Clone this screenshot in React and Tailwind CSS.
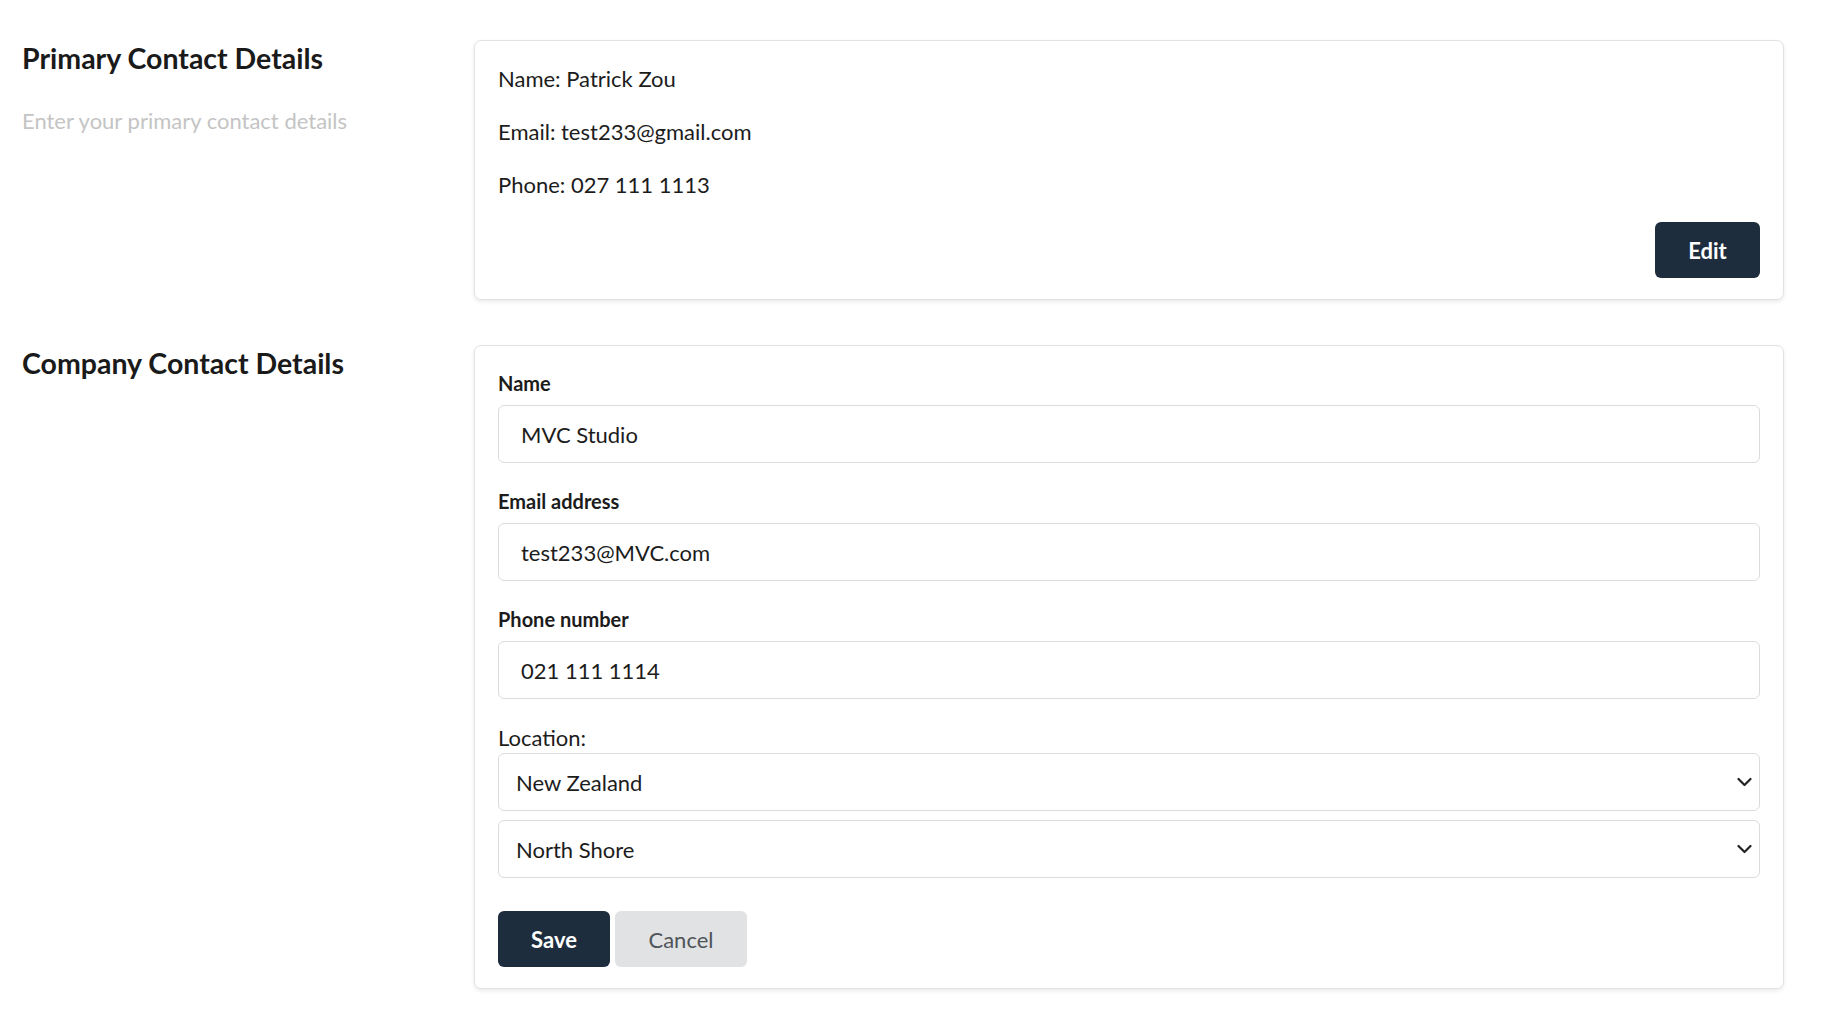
import React from 'react'

function Chevron() {
  return (
    <svg
      className="pointer-events-none absolute right-[8px] top-1/2 -translate-y-1/2"
      width="15"
      height="10"
      viewBox="0 0 15 10"
      fill="none"
    >
      <path d="M1.5 2 L7.5 8 L13.5 2" stroke="#222" strokeWidth="2.2" strokeLinecap="round" strokeLinejoin="round" />
    </svg>
  )
}

function Field({ label, value, first }) {
  return (
    <div className={first ? '' : 'mt-[24px]'}>
      <label className="block text-[20px] leading-[28px] font-bold text-[#1c1c1c] mb-[8px]">{label}</label>
      <input
        defaultValue={value}
        className="w-full h-[58px] rounded-[6px] border border-[#dcdcdc] bg-white px-[22px] text-[22px] text-[#1c1c1c] outline-none"
      />
    </div>
  )
}

function Select({ value, options, className }) {
  return (
    <div className={'relative ' + (className || '')}>
      <select
        defaultValue={value}
        className="w-full h-[58px] appearance-none rounded-[6px] border border-[#dcdcdc] bg-white pl-[17px] pr-10 text-[22px] text-[#1c1c1c] outline-none"
      >
        {options.map(o => (
          <option key={o}>{o}</option>
        ))}
      </select>
      <Chevron />
    </div>
  )
}

export default function App() {
  return (
    <div className="min-h-screen bg-white pt-[40px] pl-[22px] pr-[46px] text-[#1c1c1c]" style={{ fontFamily: 'Lato, "Open Sans", sans-serif' }}>
      <section className="flex items-start">
        <div className="w-[452px] shrink-0">
          <h2 className="text-[28.5px] leading-[36px] font-bold text-[#1a1a1a]">Primary Contact Details</h2>
          <p className="mt-[31px] text-[22px] leading-[28px] text-[#c4c4c4]">Enter your primary contact details</p>
        </div>
        <div className="flex-1 rounded-[7px] border border-[#e2e2e2] bg-white p-[23px] pb-[21px] shadow-[0_2px_4px_rgba(0,0,0,0.08)]">
          <div className="flex flex-col gap-[23px] text-[22px] leading-[30px] text-[#1c1c1c]">
            <p>Name: Patrick Zou</p>
            <p>Email: test233@gmail.com</p>
            <p>Phone: 027 111 1113</p>
          </div>
          <div className="mt-[22px] flex justify-end">
            <button className="h-[56px] w-[105px] rounded-[6px] bg-[#1e2d3e] text-[22px] font-bold text-white">Edit</button>
          </div>
        </div>
      </section>

      <section className="mt-[45px] flex items-start">
        <div className="w-[452px] shrink-0">
          <h2 className="text-[28.5px] leading-[36px] font-bold text-[#1a1a1a]">Company Contact Details</h2>
        </div>
        <div className="flex-1 rounded-[7px] border border-[#e2e2e2] bg-white p-[23px] pb-[21px] shadow-[0_2px_4px_rgba(0,0,0,0.08)]">
          <Field label="Name" value="MVC Studio" first />
          <Field label="Email address" value="test233@MVC.com" />
          <Field label="Phone number" value="021 111 1114" />
          <div className="mt-[25px]">
            <label className="block text-[22px] leading-[28px] text-[#1c1c1c] mb-[1px]">Location:</label>
            <Select value="New Zealand" options={['New Zealand', 'Australia']} />
            <Select className="mt-[9px]" value="North Shore" options={['North Shore', 'Auckland Central', 'West Auckland']} />
          </div>
          <div className="mt-[33px] flex gap-[5px]">
            <button className="h-[56px] w-[112px] rounded-[6px] bg-[#1e2d3e] text-[22px] font-bold text-white">Save</button>
            <button className="h-[56px] w-[132px] rounded-[6px] bg-[#e1e2e4] text-[22px] text-[#4f5459]">Cancel</button>
          </div>
        </div>
      </section>
    </div>
  )
}
